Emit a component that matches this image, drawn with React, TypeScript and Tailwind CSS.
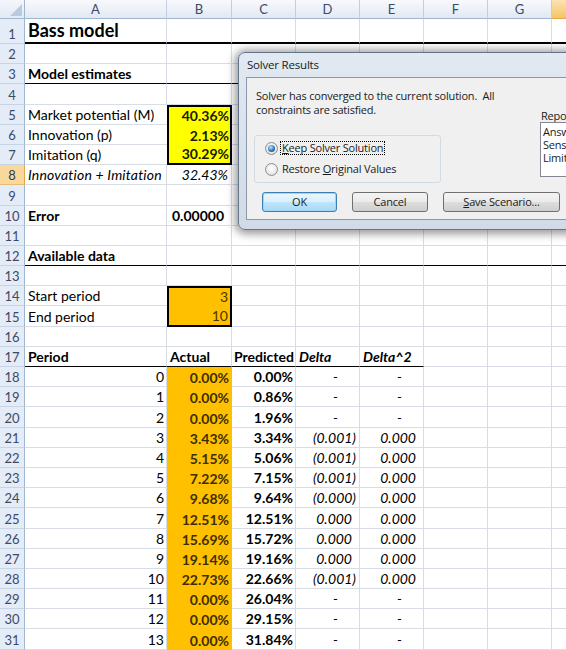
import React from "react";

// column widths: A..H (row header is separate)
const W = ["w-[142px]", "w-[65px]", "w-[64px]", "w-[64px]", "w-[64px]", "w-[64px]", "w-[64px]", "w-[64px]"];

const GRID = "border-r border-b border-[#d8dde5]";
const UNDER = "border-r border-r-[#d8dde5] border-b border-b-black";
const THICK = "border-r border-r-[#d8dde5] border-b-2 border-b-black";

type Spec = { t?: React.ReactNode; c?: string; b?: string };

function Cell({ col, spec }: { col: number; spec: Spec }) {
  return (
    <div
      className={`${W[col]} shrink-0 h-full flex items-end pb-[2px] px-[3px] leading-[14px] whitespace-nowrap ${spec.b ?? GRID} ${spec.c ?? ""}`}
    >
      {spec.t}
    </div>
  );
}

function RowHead({ n, active }: { n: number; active?: boolean }) {
  return (
    <div
      className={`w-[25px] shrink-0 h-full flex items-end pb-[2px] leading-[14px] justify-center text-[13px] border-r border-b ${
        active
          ? "bg-[#f9d89c] border-r-[#e2a849] border-b-[#e9bd70] text-[#2b3a55]"
          : "bg-[#e4ecf7] border-r-[#9eb6ce] border-b-[#c6d4e6] text-[#3b4a67]"
      }`}
    >
      {n}
    </div>
  );
}

function Row({
  n,
  cells = [],
  h = "h-[20.2px]",
  b,
  active,
}: {
  n: number;
  cells?: Spec[];
  h?: string;
  b?: string;
  active?: boolean;
}) {
  return (
    <div className={`flex ${h}`}>
      <RowHead n={n} active={active} />
      {W.map((_, i) => {
        const s = cells[i] ?? {};
        return <Cell key={i} col={i} spec={{ ...s, b: s.b ?? b }} />;
      })}
    </div>
  );
}

function HeaderRow() {
  const letters = ["A", "B", "C", "D", "E", "F", "G", "H"];
  return (
    <div className="flex h-[19px]">
      <div className="w-[25px] shrink-0 h-full relative bg-[linear-gradient(#f3f6fb,#e2eaf5)] border-r border-b border-[#9eb6ce]">
        <svg className="absolute right-[2px] bottom-[2px]" width="12" height="12" viewBox="0 0 12 12">
          <polygon points="12,0 12,12 0,12" fill="#b9cae0" />
        </svg>
      </div>
      {letters.map((l, i) => (
        <div
          key={l}
          className={`${W[i]} shrink-0 h-full flex items-end pb-[2px] leading-[14px] justify-center text-[13px] border-r border-b ${
            i === 7
              ? "bg-[linear-gradient(#fbe3b4,#f5c466)] border-r-[#e2a849] border-b-[#e2a849] text-[#2b3a55]"
              : "bg-[linear-gradient(#f7f9fc,#e2e9f4)] border-r-[#c3cfdf] border-b-[#9eb6ce] text-[#3b4a67]"
          }`}
        >
          {l}
        </div>
      ))}
    </div>
  );
}

const data: [number, string, string, string, string][] = [
  [0, "0.00%", "0.00%", "-", "-"],
  [1, "0.00%", "0.86%", "-", "-"],
  [2, "0.00%", "1.96%", "-", "-"],
  [3, "3.43%", "3.34%", "(0.001)", "0.000"],
  [4, "5.15%", "5.06%", "(0.001)", "0.000"],
  [5, "7.22%", "7.15%", "(0.001)", "0.000"],
  [6, "9.68%", "9.64%", "(0.000)", "0.000"],
  [7, "12.51%", "12.51%", "0.000", "0.000"],
  [8, "15.69%", "15.72%", "0.000", "0.000"],
  [9, "19.14%", "19.16%", "0.000", "0.000"],
  [10, "22.73%", "22.66%", "(0.001)", "0.000"],
  [11, "0.00%", "26.04%", "-", "-"],
  [12, "0.00%", "29.15%", "-", "-"],
  [13, "0.00%", "31.84%", "-", "-"],
];

function acct(v: string) {
  if (v === "-") return "justify-end italic pr-[21px]";
  if (v.startsWith("(")) return "justify-end italic pr-[3px]";
  return "justify-end italic pr-[7px]";
}

const YELLOW = "bg-[#ffff00] justify-end font-bold pr-[1px] text-[#1a1a00]";
const ORANGE = "bg-[#ffc000] justify-end pr-[2px] text-[#4a3600]";
const NOGRID_R = "border-b border-[#d8dde5]";

function Sheet() {
  return (
    <div className="[font-family:Lato,sans-serif] text-[14px] text-black">
      <HeaderRow />
      <Row
        n={1}
        h="h-[25px]"
        b={THICK}
        cells={[{ t: "Bass model", c: "font-bold text-[18px] leading-[18px] pb-[3px]" }]}
      />
      <Row n={2} />
      <Row n={3} b={UNDER} cells={[{ t: "Model estimates", c: "font-bold" }]} />
      <Row n={4} />
      <Row
        n={5}
        cells={[
          { t: "Market potential (M)", b: NOGRID_R },
          { t: "40.36%", c: YELLOW, b: "border-x-2 border-t-2 border-black" },
        ]}
      />
      <Row
        n={6}
        cells={[
          { t: "Innovation (p)", b: NOGRID_R },
          { t: "2.13%", c: YELLOW, b: "border-x-2 border-black" },
        ]}
      />
      <Row
        n={7}
        cells={[
          { t: "Imitation (q)", b: NOGRID_R },
          { t: "30.29%", c: YELLOW, b: "border-x-2 border-b-2 border-black" },
        ]}
      />
      <Row
        n={8}
        active
        cells={[
          { t: "Innovation + Imitation", c: "italic tracking-[0.2px]" },
          { t: "32.43%", c: "italic justify-end" },
        ]}
      />
      <Row n={9} />
      <Row
        n={10}
        cells={[
          { t: "Error", c: "font-bold" },
          { t: "0.00000", c: "font-bold justify-end pr-[7px]" },
        ]}
      />
      <Row n={11} />
      <Row n={12} b={UNDER} cells={[{ t: "Available data", c: "font-bold" }]} />
      <Row n={13} />
      <Row
        n={14}
        cells={[
          { t: "Start period", b: NOGRID_R },
          { t: "3", c: ORANGE, b: "border-x-2 border-t-2 border-black" },
        ]}
      />
      <Row
        n={15}
        cells={[
          { t: "End period", b: NOGRID_R },
          { t: "10", c: ORANGE, b: "border-x-2 border-b-2 border-black" },
        ]}
      />
      <Row n={16} />
      <Row
        n={17}
        cells={[
          { t: "Period", c: "font-bold", b: UNDER },
          { t: "Actual", c: "font-bold", b: UNDER },
          { t: "Predicted", c: "font-bold pl-[2px]", b: UNDER },
          { t: "Delta", c: "font-bold italic", b: UNDER },
          { t: "Delta^2", c: "font-bold italic", b: UNDER },
        ]}
      />
      {data.map(([p, a, pr, d, d2], i) => (
        <Row
          key={p}
          n={18 + i}
          cells={[
            { t: String(p), c: "justify-end pr-[2px]" },
            { t: a, c: "bg-[#ffc000] justify-end font-bold pr-[3px] text-[#3d2e00]", b: "" },
            { t: pr, c: "justify-end font-bold pr-[2px]" },
            { t: d, c: acct(d) },
            { t: d2, c: d2 === "-" ? "justify-end italic pr-[21px]" : "justify-end italic pr-[7px]" },
          ]}
        />
      ))}
    </div>
  );
}

function Radio({ checked }: { checked?: boolean }) {
  return (
    <span className="w-[13px] h-[13px] rounded-full border border-[#8c8f92] bg-[radial-gradient(circle_at_50%_40%,#ffffff,#ebebeb_55%,#cfd2d4)] flex items-center justify-center shrink-0">
      {checked && (
        <span className="w-[7px] h-[7px] rounded-full bg-[radial-gradient(circle_at_40%_35%,#bfe8ff,#2d79b8_55%,#163f69)]" />
      )}
    </span>
  );
}

const BTN = "h-[20px] rounded-[3px] border flex items-center justify-center shrink-0";
const BTN_GREY =
  "border-[#707070] bg-[linear-gradient(#f3f3f3_0%,#ebebeb_48%,#dddddd_52%,#cfcfcf_100%)]";
const BTN_DEFAULT =
  "border-[#3c7fb1] bg-[linear-gradient(#eaf6fd_0%,#d9f0fc_48%,#bee6fd_52%,#a7d9f5_100%)] shadow-[inset_0_0_0_1px_#9fd5f5]";

function Dialog() {
  return (
    <div className="absolute left-[238px] top-[52px] w-[345px] h-[178px] rounded-[7px] border border-[#64758a] bg-[linear-gradient(#e1e9f2,#d0dbe7)] shadow-[0_1px_9px_3px_rgba(0,0,0,0.4)] flex flex-col pl-[7px] pb-[9px] [font-family:'Open_Sans',sans-serif] text-[11px] tracking-[-0.2px] text-[#1b1b1b]">
      <div className="h-[24px] pl-[1px] flex items-center text-[11.5px]">Solver Results</div>
      <div className="flex-1 bg-[#f0f0f0] border border-[#8a98a9] flex flex-col">
        <div className="flex">
          <div className="w-[293px] shrink-0">
            <div className="pl-[9px] pt-[11px] leading-[14px]">
              <div>Solver has converged to the current solution.&nbsp; All</div>
              <div>constraints are satisfied.</div>
            </div>
            <div className="ml-[7px] mt-[18px] w-[187px] h-[48px] rounded-[3px] border border-[#d3dbe2] pl-[10px] pt-[5px] flex flex-col gap-[7px]">
              <div className="flex items-center h-[14px] gap-[2px]">
                <Radio checked />
                <span className="border border-dotted border-black px-[1px] leading-[12px]">
                  <span className="underline">K</span>eep Solver Solution
                </span>
              </div>
              <div className="flex items-center h-[14px] gap-[3px]">
                <Radio />
                <span className="pl-[1px]">
                  Restore <span className="underline">O</span>riginal Values
                </span>
              </div>
            </div>
          </div>
          <div className="pt-[32px] flex flex-col">
            <div className="leading-[12px] pl-[1px] whitespace-nowrap">Reports</div>
            <div className="w-[100px] h-[55px] border border-[#828790] bg-white px-[2px] pt-[2px] leading-[13px] whitespace-nowrap">
              <div>Answer</div>
              <div>Sensitivity</div>
              <div>Limits</div>
            </div>
          </div>
        </div>
        <div className="flex pl-[15px] gap-[15px] mt-[9px]">
          <div className={`${BTN} ${BTN_DEFAULT} w-[75px]`}>OK</div>
          <div className={`${BTN} ${BTN_GREY} w-[76px]`}>Cancel</div>
          <div className={`${BTN} ${BTN_GREY} w-[117px]`}>
            <span>
              <span className="underline">S</span>ave Scenario...
            </span>
          </div>
        </div>
      </div>
    </div>
  );
}

export default function App() {
  return (
    <div className="relative w-[566px] h-[650px] overflow-hidden bg-white">
      <Sheet />
      <Dialog />
    </div>
  );
}
